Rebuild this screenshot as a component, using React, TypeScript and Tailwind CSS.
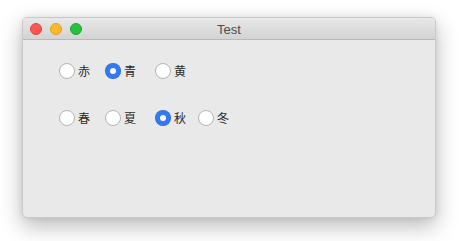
import React from "react";

function Radio({ checked, label, className = "" }: { checked?: boolean; label: string; className?: string }) {
  return (
    <div className={"flex items-center " + className}>
      {checked ? (
        <div className="w-[16px] h-[16px] rounded-full bg-[#3478f6] flex items-center justify-center shadow-[inset_0_0_0_0.5px_rgba(0,0,0,0.15)]">
          <div className="w-[6px] h-[6px] rounded-full bg-white" />
        </div>
      ) : (
        <div className="w-[16px] h-[16px] rounded-full bg-white border border-[#b4b4b4]" />
      )}
      <span className="ml-[3px] text-[12px] leading-[16px] text-[#2a2a2a]">{label}</span>
    </div>
  );
}

export default function App() {
  return (
    <div
      className="w-[460px] h-[241px] bg-white pt-[17px] pl-[22px]"
      style={{ fontFamily: '"Noto Sans CJK JP", "Noto Sans", sans-serif' }}
    >
      <div className="w-[414px] h-[201px] rounded-[5px] bg-[#e9e9e9] border border-[#c9c9c9] overflow-hidden shadow-[0_8px_22px_rgba(0,0,0,0.28),0_0_6px_rgba(0,0,0,0.08)] flex flex-col">
        <div className="relative h-[22px] bg-gradient-to-b from-[#e8e8e8] to-[#d3d3d3] border-b border-[#b9b9b9] flex items-center justify-center">
          <div className="absolute left-[7px] top-[5px] flex gap-[8px]">
            <div className="w-[12px] h-[12px] rounded-full bg-[#fd5552] border border-[#e2433f]" />
            <div className="w-[12px] h-[12px] rounded-full bg-[#fdb92c] border border-[#e09e1f]" />
            <div className="w-[12px] h-[12px] rounded-full bg-[#27c13d] border border-[#1ba92e]" />
          </div>
          <span
            className="mt-[2px] text-[13px] text-[#4c4c4c] leading-none"
            style={{ fontFamily: '"Liberation Sans", Arial, sans-serif' }}
          >
            Test
          </span>
        </div>
        <div className="flex flex-col pl-[36px] pt-[23px]">
          <div className="flex">
            <Radio label="赤" />
            <Radio label="青" checked className="ml-[15px]" />
            <Radio label="黄" className="ml-[19px]" />
          </div>
          <div className="flex mt-[31px]">
            <Radio label="春" />
            <Radio label="夏" className="ml-[15px]" />
            <Radio label="秋" checked className="ml-[19px]" />
            <Radio label="冬" className="ml-[12px]" />
          </div>
        </div>
      </div>
    </div>
  );
}
